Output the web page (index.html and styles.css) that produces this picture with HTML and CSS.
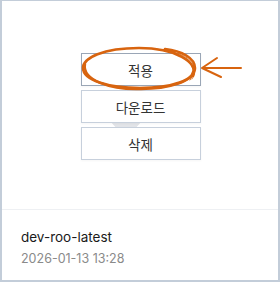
FILE: index.html
```html
<!doctype html>
<html lang="ko">
  <head>
    <meta charset="UTF-8">
    <meta name="viewport" content="width=device-width, initial-scale=1.0">
    <title>Snapshot card</title>
    <link rel="stylesheet" href="styles.css">
  </head>
  <body>
    <div class="card">
      <div class="preview">
        <svg class="preview-icon" width="40" height="30" viewBox="0 0 40 30">
          <path d="M4 6 C4 2 10 0 14 3 L20 8 L26 3 C30 0 36 2 36 6 L20 24 Z" fill="#e2e4e8"/>
        </svg>
        <div class="menu">
          <button class="menu-item active">적용</button>
          <button class="menu-item">다운로드</button>
          <button class="menu-item">삭제</button>
        </div>
        <!-- hand-drawn highlight, page coordinates -->
        <svg class="mark" width="280" height="110" viewBox="0 0 280 110">
          <g fill="none" stroke="#d8640f" stroke-linecap="round">
            <path d="M193 76 C199 62 175 48 139 48 C103 48 83 58 83 68 C83 80 108 88 140 88 C172 88 195 80 195 68 C195 58 182 51 165 49" stroke-width="2.6"/>
            <path d="M85 64 C82 80 110 90 141 89 C170 89 192 81 193 72" stroke-width="2.4"/>
            <path d="M190 80 C200 66 185 52 155 49" stroke-width="1"/>
            <path d="M192 79 C201 65 188 52 160 50" stroke-width="0.8"/>
            <path d="M202 68 L217 58 M202 68 L221 77 M203 68 L241 68" stroke-width="2"/>
          </g>
        </svg>
      </div>
      <div class="info">
        <div class="name">dev-roo-latest</div>
        <div class="date">2026-01-13 13:28</div>
      </div>
    </div>
  </body>
</html>
```

FILE: styles.css
```css
body {
  margin: 0;
  font-family: Inter, 'Noto Sans CJK KR', sans-serif;
  background: #fff;
}

.card {
  width: 280px;
  height: 282px;
  box-sizing: border-box;
  border: 1px solid #c3cdd9;
  border-left-width: 2px;
  border-right-width: 2px;
  border-bottom-width: 2px;
  background: #fff;
  display: flex;
  flex-direction: column;
}

.preview {
  position: relative;
  height: 209px;
  border-bottom: 1px solid #eef0f3;
  display: flex;
  flex-direction: column;
  align-items: center;
  padding-top: 52px;
  box-sizing: border-box;
}

.preview-icon {
  position: absolute;
  left: 104px;
  top: 114px;
}

.menu {
  position: relative;
  display: flex;
  flex-direction: column;
  gap: 4px;
  margin-left: 1px;
}

.menu-item {
  width: 120px;
  height: 33px;
  border: 1px solid #c7d0dc;
  background: #fff;
  color: #333;
  font-family: 'Noto Sans CJK KR', sans-serif;
  font-size: 13.5px;
  padding: 0;
  box-shadow: 0 1px 2px rgba(0, 0, 0, 0.04);
}

.menu-item.active {
  border-color: #9aa6b6;
}

.mark {
  position: absolute;
  left: -2px;
  top: -1px;
}

.info {
  padding: 17px 0 0 19px;
}

.name {
  font-size: 13.5px;
  color: #1a1a1a;
  line-height: 20px;
}

.date {
  font-size: 12.5px;
  color: #8a8a8a;
  line-height: 20px;
  margin-top: 2px;
}
```
